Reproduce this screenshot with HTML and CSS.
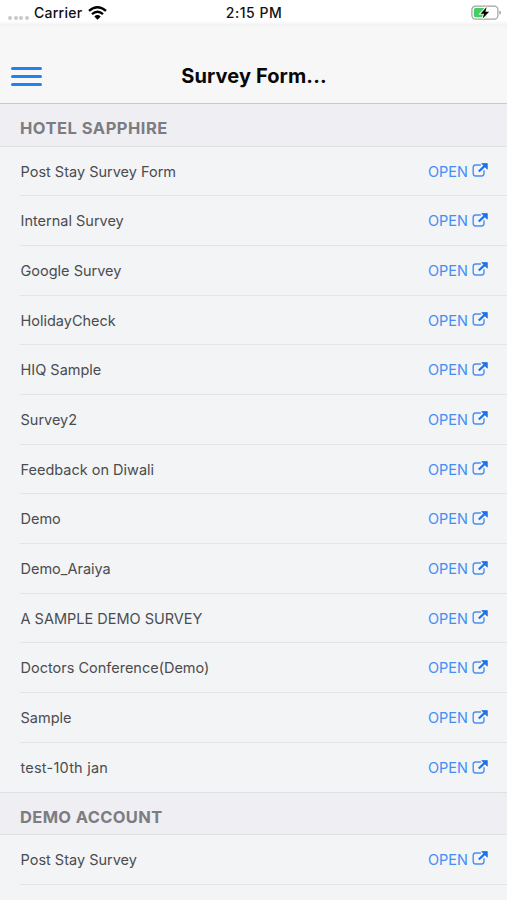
FILE: index.html
```html
<!DOCTYPE html>
<html lang="en">
<head>
<meta charset="utf-8">
<title>Survey Forms</title>
<link rel="stylesheet" href="styles.css">
</head>
<body>
<svg class="defs" width="0" height="0" aria-hidden="true">
  <symbol id="open" viewBox="0 0 16 14">
    <path d="M8.400 2H3.600Q1.200 2 1.200 4.400V10.600Q1.200 13 3.600 13H9.600Q12 13 12 10.600V7.800" fill="none" stroke="#4c8ff0" stroke-width="1.400" stroke-linecap="round"/>
    <path d="M6.800 8.500L13 2.600" fill="none" stroke="#1f72e8" stroke-width="2.200"/>
    <path d="M9.800 .6H15.300V6.200Z" fill="#1f72e8" stroke="#1f72e8" stroke-width=".8" stroke-linejoin="round"/>
  </symbol>
</svg>
<header class="status">
  <div class="carrier">
    <span class="dots"><i></i><i></i><i></i><i></i></span>
    <span class="name">Carrier</span>
    <svg class="wifi" width="19" height="14" viewBox="0 0 19 14">
      <g fill="none" stroke="#000" stroke-width="2.400">
        <path d="M1 4.900Q9.500 -2.300 18 4.900"/>
        <path d="M4 8.100Q9.500 3.500 15 8.100"/>
      </g>
      <path d="M6.300 10.400Q9.500 7.800 12.700 10.400L9.500 13.700Z"/>
    </svg>
  </div>
  <time>2:15 PM</time>
  <svg class="battery" width="31" height="16" viewBox="0 0 31 16">
    <rect x=".9" y="1.200" width="26" height="13" rx="3.600" fill="#fff" stroke="#a2a2a2" stroke-width="1.200"/>
    <rect x="2.800" y="3.100" width="13" height="9.200" rx="1.800" fill="#42cf62"/>
    <path d="M28.300 5.800Q30 6 30 7.700T28.300 9.600Z" fill="#a2a2a2"/>
    <path d="M15.700 1.900L9.500 8.700H13L11.600 13.600L18.200 6.700H14.400Z" fill="#000" stroke="#fff" stroke-width="1.800" paint-order="stroke"/>
  </svg>
</header>
<nav class="navbar">
  <div class="menu"><i></i><i></i><i></i></div>
  <h1>Survey Form...</h1>
</nav>
<main>
  <h2 class="first">HOTEL SAPPHIRE</h2>
  <ul>
    <li><span>Post Stay Survey Form</span><a>OPEN<svg><use href="#open"/></svg></a></li>
    <li><span>Internal Survey</span><a>OPEN<svg><use href="#open"/></svg></a></li>
    <li><span>Google Survey</span><a>OPEN<svg><use href="#open"/></svg></a></li>
    <li><span>HolidayCheck</span><a>OPEN<svg><use href="#open"/></svg></a></li>
    <li><span>HIQ Sample</span><a>OPEN<svg><use href="#open"/></svg></a></li>
    <li><span>Survey2</span><a>OPEN<svg><use href="#open"/></svg></a></li>
    <li><span>Feedback on Diwali</span><a>OPEN<svg><use href="#open"/></svg></a></li>
    <li><span>Demo</span><a>OPEN<svg><use href="#open"/></svg></a></li>
    <li><span>Demo_Araiya</span><a>OPEN<svg><use href="#open"/></svg></a></li>
    <li><span>A SAMPLE DEMO SURVEY</span><a>OPEN<svg><use href="#open"/></svg></a></li>
    <li><span>Doctors Conference(Demo)</span><a>OPEN<svg><use href="#open"/></svg></a></li>
    <li><span>Sample</span><a>OPEN<svg><use href="#open"/></svg></a></li>
    <li><span class="numeric">test-10th jan</span><a>OPEN<svg><use href="#open"/></svg></a></li>
  </ul>
  <h2>DEMO ACCOUNT</h2>
  <ul>
    <li><span>Post Stay Survey</span><a>OPEN<svg><use href="#open"/></svg></a></li>
    <li></li>
  </ul>
</main>
</body>
</html>
```
FILE: styles.css
```css
* { box-sizing: border-box; }
html, body { height: 900px; overflow: hidden; }
body {
  margin: 0;
  background: #f2f4f6;
  font-family: Inter, "Liberation Sans", sans-serif;
  color: #4b4c4f;
}
h1, h2, ul { margin: 0; padding: 0; }
.defs { display: block; }
.status {
  display: grid;
  grid-template-columns: 1fr auto 1fr;
  align-items: center;
  height: 26px;
  padding: 0 5px 0 8px;
  background: linear-gradient(#fff 78%, #f1f1f1);
  color: #111;
  font-size: 14px;
  font-weight: 500;
  line-height: 26px;
}
.status time { margin-right: 2px; letter-spacing: .5px; }
.carrier { display: flex; align-items: center; }
.name { letter-spacing: .25px; }
.dots { display: flex; gap: 1.700px; margin: 9px 5px 0 0; }
.dots i { width: 4px; height: 4px; border-radius: 50%; background: #c9c9c9; }
.wifi { margin-left: 6px; }
.battery { justify-self: end; }
.navbar {
  display: grid;
  grid-template-columns: 1fr auto 1fr;
  align-items: center;
  height: 78px;
  padding: 23px 10px 0 11px;
  background: #f7f7f8;
  border-bottom: 1px solid #c8c8cc;
}
.menu { display: grid; gap: 5px; width: 31px; margin-top: 1px; }
.menu i { height: 3px; border-radius: 2px; background: #2181ee; }
h1 {
  color: #080808;
  font-size: 20px;
  font-weight: 700;
  letter-spacing: .1px;
  line-height: 26px;
}
h2 {
  height: 42.500px;
  padding: 4px 20px 0;
  background: #eeeef3;
  border-bottom: 1px solid #dfe0e4;
  color: #7c7c81;
  font-size: 16.500px;
  font-weight: 700;
  letter-spacing: .35px;
  line-height: 41px;
}
.first { letter-spacing: .5px; }
ul { list-style: none; }
ul + h2 { border-top: 1px solid #dedfe3; }
li {
  display: flex;
  align-items: center;
  justify-content: space-between;
  height: 49.690px;
  margin-left: 20px;
  padding: .4px 20px 0 .5px;
  border-bottom: 1px solid #e2e4e6;
  font-size: 14.500px;
}
.numeric { letter-spacing: .22px; }
li:last-child { border-bottom: 0; }
a { display: flex; align-items: center; color: #458df2; }
a svg { width: 16px; height: 14px; margin: -2px -.5px 0 3.500px; }
```
